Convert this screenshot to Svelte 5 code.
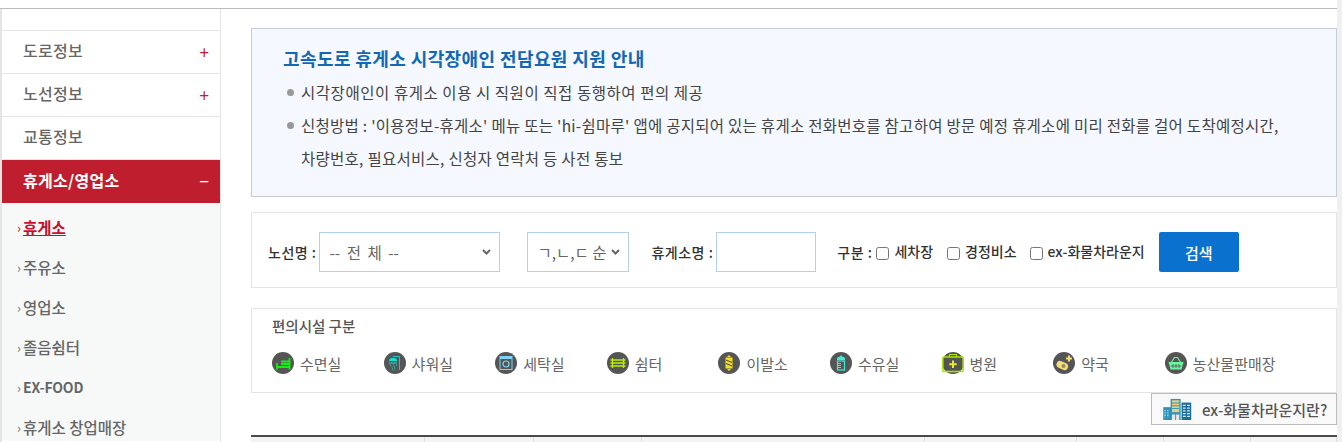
<script>
  const menu = [
    { label: '도로정보', sign: '+' },
    { label: '노선정보', sign: '+' },
    { label: '교통정보', sign: '' },
    { label: '휴게소/영업소', sign: '−', active: true }
  ];
  const sub = ['휴게소', '주유소', '영업소', '졸음쉼터', 'EX-FOOD', '휴게소 창업매장'];
  const facilities = ['수면실', '샤워실', '세탁실', '쉼터', '이발소', '수유실', '병원', '약국', '농산물판매장'];
</script>

<div class="page">
  <div class="content">
    <div class="rule"></div>
    <div class="layout">
      <aside class="side">
        <div class="side-top"></div>
        {#each menu as m}
          <div class="item" class:active={m.active}>
            <span>{m.label}</span>
            {#if m.sign}<i class="sign">{m.sign}</i>{/if}
          </div>
        {/each}
        <ul class="sub">
          {#each sub as s, i}
            <li class:cur={i === 0} class:latin={i === 4}><b class="chev">›</b><span>{s}</span></li>
          {/each}
        </ul>
      </aside>

      <main class="main">
        <section class="notice">
          <h2>고속도로 휴게소 시각장애인 전담요원 지원 안내</h2>
          <ul>
            <li>시각장애인이 휴게소 이용 시 직원이 직접 동행하여 편의 제공</li>
            <li class="long">신청방법 : '이용정보-휴게소' 메뉴 또는 'hi-쉼마루' 앱에 공지되어 있는 휴게소 전화번호를 참고하여 방문 예정 휴게소에 미리 전화를 걸어 도착예정시간,<br />차량번호, 필요서비스, 신청자 연락처 등 사전 통보</li>
          </ul>
        </section>

        <section class="search">
          <label class="lab first" for="route">노선명 :</label>
          <div class="sel-wrap route">
            <select id="route" class="sel"><option>-- 전 체 --</option></select>
            <svg class="arrow" viewBox="0 0 9 6" width="9" height="6" aria-hidden="true"><path d="M1 1l3.500 3.500L8 1" fill="none" stroke="#666" stroke-width="2" /></svg>
          </div>
          <div class="sel-wrap order">
            <select class="sel" aria-label="정렬"><option>ㄱ,ㄴ,ㄷ 순</option></select>
            <svg class="arrow" viewBox="0 0 9 6" width="9" height="6" aria-hidden="true"><path d="M1 1l3.500 3.500L8 1" fill="none" stroke="#666" stroke-width="2" /></svg>
          </div>
          <label class="lab name" for="nm">휴게소명 :</label>
          <input id="nm" class="txt" type="text" />
          <span class="lab kind">구분 :</span>
          <label class="chk c1"><input type="checkbox" /><span>세차장</span></label>
          <label class="chk c2"><input type="checkbox" /><span>경정비소</span></label>
          <label class="chk c3"><input type="checkbox" /><span>ex-화물차라운지</span></label>
          <button class="btn">검색</button>
        </section>

        <section class="fac">
          <h3>편의시설 구분</h3>
          <div class="fac-row">
            {#each facilities as f, i}
              <div class="fac-item">
                <svg class="ico" viewBox="0 0 22 22" width="22" height="22" aria-hidden="true">
                  <circle cx="11" cy="11" r="11" fill="#555" />
                  {#if i === 0}
                    <path d="M5 11v6.500M5 15h12.500M17.500 6v11.500M9 12h8.500M9 9.500h8.500" fill="none" stroke="#12f012" stroke-width="1.800" />
                  {:else if i === 1}
                    <path d="M9 5V4.500h6.500V18" fill="none" stroke="#17c8c8" stroke-width="1" />
                    <path d="M5 9a3.500 3 0 0 1 3-3h2a3 3 0 0 1 3 3z" fill="#14e0d0" />
                    <path d="M5 11h8" stroke="#14e0d0" />
                    <path d="M6 13h1M9 13h1M12 13h1M7.500 15h1M10 15h1M8 17h1M10 17h1" stroke="#14e0d0" />
                  {:else if i === 2}
                    <rect x="5" y="4.500" width="12" height="13" fill="none" stroke="#7fd4f5" />
                    <rect x="5" y="4.500" width="12" height="2.500" fill="#7fd4f5" />
                    <circle cx="11" cy="12" r="3" fill="none" stroke="#7fd4f5" stroke-width="1.200" />
                  {:else if i === 3}
                    <path d="M3.500 8h15M3.500 11h15M3.500 14h15" stroke="#b8f000" stroke-width="1.300" />
                    <path d="M5.500 6v10M16.500 6v10" stroke="#b8f000" stroke-width="1.300" />
                  {:else if i === 4}
                    <path d="M11 3l2 2H9zM11 19l-2-2h4z" fill="#f5e020" />
                    <rect x="7.500" y="5.500" width="7" height="11" fill="#f5e020" />
                    <path d="M8 8l6 2.500M8 11.500l6 2.500" stroke="#555" stroke-width="1.200" />
                  {:else if i === 5}
                    <path d="M11 3l1 1.500a4 3 0 0 1 3 3.500H7a4 3 0 0 1 3-3.500z" fill="#3cf0d8" />
                    <rect x="7.500" y="9" width="7" height="9" fill="none" stroke="#3cf0d8" stroke-width="1.200" />
                    <path d="M8 11.500h3M8 13.500h3M8 15.500h3" stroke="#3cf0d8" />
                  {:else if i === 6}
                    <rect x="0.800" y="5" width="20.400" height="14.500" rx="1" fill="none" stroke="#a8e600" stroke-width="1.600" />
                    <path d="M7.500 5V2.500h7V5" fill="none" stroke="#a8e600" stroke-width="1.200" />
                    <path d="M11 8.500v7.500M7.300 12.300h7.400" stroke="#e6f020" stroke-width="2" />
                  {:else if i === 7}
                    <path d="M7 12.500l4.500 2" stroke="#f5dc78" stroke-width="7" stroke-linecap="round" />
                    <circle cx="10.500" cy="14" r="2" fill="#555" opacity=".6" />
                    <path d="M16 3.500v6M13 6.500h6" stroke="#f5dc78" stroke-width="2" />
                  {:else}
                    <path d="M3.500 10h15l-2 7.500h-11z" fill="#6ef5a0" />
                    <path d="M6.500 10l3-4.500h3l3 4.500" fill="none" stroke="#6ef5a0" stroke-width="1.200" />
                    <path d="M8 12v4M11 12v4M14 12v4M5.500 14h11" stroke="#555" stroke-width=".8" />
                  {/if}
                </svg>
                <span>{f}</span>
              </div>
            {/each}
          </div>
        </section>

        <button class="float">
          <svg viewBox="0 0 32 24" width="30" height="22" aria-hidden="true">
            <rect x="1" y="10" width="9" height="14" fill="#2d93bd" />
            <rect x="9" y="1" width="11" height="23" fill="#2d93bd" />
            <rect x="10.500" y="2.500" width="8" height="13" fill="#e4cf83" />
            <path d="M10.500 5.500h8M10.500 8.500h8M10.500 11.500h8" stroke="#2d93bd" />
            <rect x="10.500" y="18" width="3.500" height="6" fill="#e8e8e8" />
            <rect x="15" y="18" width="3.500" height="6" fill="#e8e8e8" />
            <rect x="21" y="5" width="10.500" height="19" fill="#1d6c97" />
            <path d="M22.500 8h3M27 8h3M22.500 11h3M27 11h3M22.500 14h3M27 14h3M22.500 17h3M27 17h3M22.500 20h3M27 20h3" stroke="#d7edf7" stroke-width="1.500" />
            <path d="M3 13v8M6 13v8" stroke="#a8d4e8" stroke-width="1.500" stroke-dasharray="1.500 1" />
          </svg>
          <span>ex-화물차라운지란?</span>
        </button>

        <div class="table-head">
          {#each [174, 109, 108, 283, 152, 87, 87, 86] as w}
            <div class="th" style="width:{w}px"></div>
          {/each}
        </div>
      </main>
    </div>
  </div>
  <div class="edge"></div>
</div>

<style>
  :global(body) {
    margin: 0;
    background: #fff;
    font-family: "Noto Sans CJK KR", "Noto Sans", sans-serif;
    color: #555;
    overflow: hidden;
  }
  .page { width: 1342px; height: 442px; overflow: hidden; display: flex; }
  .content { width: 1337px; flex: none; }
  .edge { flex: 1; background: #f0f0f0; }
  .rule { height: 8px; border-bottom: 1px solid #bbb; }
  .layout { display: flex; height: 433px; border-left: 2px solid #e5e5e5; }

  .side { width: 218px; border-right: 1px solid #e5e5e5; flex: none; }
  .side-top { height: 21px; border-bottom: 1px solid #e5e5e5; }
  .item {
    height: 42px;
    border-bottom: 1px solid #e5e5e5;
    display: flex;
    align-items: center;
    justify-content: space-between;
    padding: 0 11px 0 21px;
    font-size: 16px;
    letter-spacing: 0.3px;
    color: #666;
    font-weight: 500;
  }
  .item span { line-height: 1; margin-top: -4px; }
  .sign { font-style: normal; font-size: 17px; color: #c01c2d; font-weight: 400; line-height: 1; letter-spacing: 0; margin-top: -2px; }
  .item.active { background: #be1e2d; color: #fff; border-bottom: 0; font-weight: 700; height: 43px; }
  .item.active .sign { color: #fff; }

  .sub { list-style: none; margin: 0; padding: 4px 0 0 15px; background: #f7f9f9; height: 234px; }
  .sub li { height: 40px; display: flex; align-items: center; font-size: 15.500px; font-weight: 500; color: #666; }
  .chev { font-weight: 400; font-size: 13px; width: 6px; color: #777; }
  .sub li.cur { color: #c8102e; font-weight: 700; }
  .sub li.cur span { text-decoration: underline; }
  .sub li.cur .chev { color: #c8102e; }
  .sub li.latin { font-weight: 700; font-size: 14px; letter-spacing: -0.2px; }

  .main { width: 1086px; margin-left: 30px; padding-top: 19px; flex: none; position: relative; }
  .notice {
    box-sizing: border-box;
    height: 169px;
    border: 1px solid #c8ccd8;
    background: #f5f8ff;
    padding: 16px 30px 0 31px;
  }
  .notice h2 { margin: 0; font-size: 18px; line-height: 26px; color: #1368b4; font-weight: 700; letter-spacing: 0.4px; }
  .notice ul { list-style: none; margin: 5px 0 0; padding: 0; }
  .notice li {
    position: relative;
    padding-left: 18px;
    font-size: 15.500px;
    letter-spacing: 0.55px;
    line-height: 33px;
    color: #444;
    font-weight: 400;
  }
  .notice li.long { letter-spacing: 0.27px; }
  .notice li::before {
    content: "";
    position: absolute;
    left: 4px;
    top: 13px;
    width: 7px;
    height: 7px;
    border-radius: 50%;
    background: #999;
  }

  .search {
    box-sizing: border-box;
    height: 76px;
    margin-top: 15px;
    border: 1px solid #e5e5e5;
    display: flex;
    align-items: center;
    padding: 4px 0 0 16px;
    color: #333;
  }
  .lab { font-weight: 500; font-size: 14px; letter-spacing: 0.5px; color: #333; white-space: nowrap; }
  .sel-wrap { position: relative; flex: none; height: 40px; }
  .sel, .txt {
    box-sizing: border-box;
    height: 40px;
    border: 1px solid #b3d0e6;
    background: #fff;
    font-family: inherit;
    font-size: 15.500px;
    color: #666;
    border-radius: 0;
    margin: 0;
  }
  .sel { width: 100%; padding: 0 0 0 9px; appearance: none; -webkit-appearance: none; }
  .arrow { position: absolute; right: 9px; top: 17px; pointer-events: none; }
  .route { width: 181px; margin-left: 3px; }
  .route .sel { word-spacing: 3px; }
  .order { width: 102px; margin-left: 27px; }
  .name { margin-left: 22px; }
  .txt { width: 100px; margin-left: 3px; }
  .kind { margin-left: 21px; }
  .chk { display: flex; align-items: center; font-size: 14px; font-weight: 500; color: #333; white-space: nowrap; }
  .chk input { width: 13px; height: 13px; margin: 2px 5px 0 0; }
  .chk span { margin-top: -3px; }
  .c1 { margin-left: 4px; }
  .c2 { margin-left: 14px; }
  .c3 { margin-left: 13px; }
  .btn {
    width: 80px;
    height: 40px;
    margin-left: 14px;
    border: 0;
    border-radius: 2px;
    background: #0b71ce;
    color: #fff;
    font-family: inherit;
    font-size: 15px;
    font-weight: 500;
    padding: 0;
  }

  .fac {
    box-sizing: border-box;
    height: 85px;
    margin-top: 20px;
    border: 1px solid #e5e5e5;
    padding: 8px 20px 0;
  }
  .fac h3 { margin: 0; font-size: 14.500px; line-height: 18px; font-weight: 500; color: #555; }
  .fac-row { display: grid; grid-template-columns: repeat(9, 111.600px); margin-top: 17px; }
  .fac-item { display: flex; align-items: center; gap: 6px; font-size: 15px; color: #666; height: 22px; white-space: nowrap; }
  .ico { flex: none; }

  .float {
    position: absolute;
    right: 0;
    top: 384px;
    box-sizing: border-box;
    width: 186px;
    height: 32px;
    display: flex;
    align-items: center;
    padding: 0 0 0 10px;
    gap: 10px;
    background: #f9f9f9;
    border: 1px solid #bbb;
    font-family: inherit;
    font-size: 15px;
    font-weight: 500;
    color: #555;
    white-space: nowrap;
  }

  .table-head {
    margin-top: 42px;
    display: flex;
    height: 8px;
    border-top: 2px solid #4a4a4a;
    background: #f3f3f3;
  }
  .th { box-sizing: border-box; height: 8px; border-right: 1px solid #ddd; }
</style>
